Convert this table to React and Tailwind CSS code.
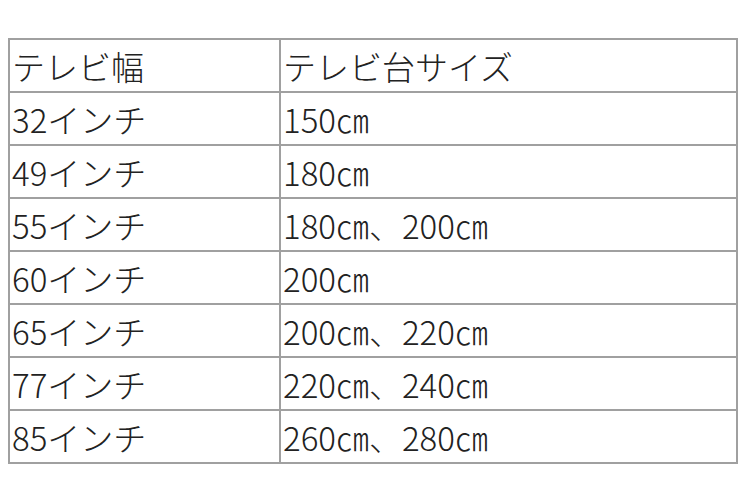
import React from 'react';

const rows = [
  ['32インチ', '150㎝'],
  ['49インチ', '180㎝'],
  ['55インチ', '180㎝、200㎝'],
  ['60インチ', '200㎝'],
  ['65インチ', '200㎝、220㎝'],
  ['77インチ', '220㎝、240㎝'],
  ['85インチ', '260㎝、280㎝'],
];

export default function App() {
  return (
    <div
      className="min-h-screen bg-white pt-[38px] pl-[8px] text-[#222]"
      style={{ fontFamily: '"Noto Sans CJK JP", "Noto Sans", sans-serif' }}
    >
      <table className="border-collapse w-[730px] text-[33px] font-light leading-none">
        <tbody>
          <tr className="h-[53px]">
            <td className="w-[271px] border-2 border-[#a0a0a0] pl-[2px] pt-[2px] align-middle">テレビ幅</td>
            <td className="border-2 border-[#a0a0a0] pl-[2px] pt-[2px] align-middle">テレビ台サイズ</td>
          </tr>
          {rows.map(([size, width]) => (
            <tr key={size} className="h-[53px]">
              <td className="border-2 border-[#a0a0a0] pl-[2px] pt-[2px] align-middle">{size}</td>
              <td className="border-2 border-[#a0a0a0] pl-[2px] pt-[2px] align-middle">{width}</td>
            </tr>
          ))}
        </tbody>
      </table>
    </div>
  );
}
